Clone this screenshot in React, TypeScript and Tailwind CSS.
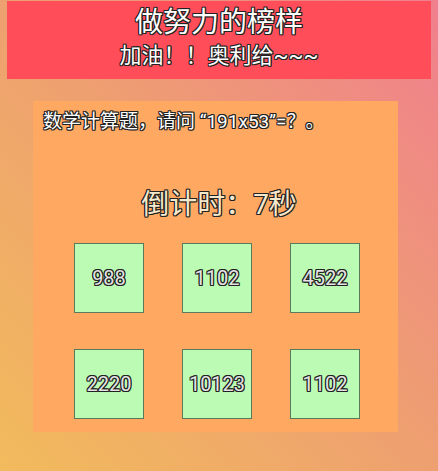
import React from "react";

const outline =
	"[text-shadow:1px_1px_0_#222,-1px_-1px_0_#222,1px_-1px_0_#222,-1px_1px_0_#222,0_1px_0_#222,0_-1px_0_#222,1px_0_0_#222,-1px_0_0_#222]";

const answers = ["988", "1102", "4522", "2220", "10123", "1102"];

function App() {
	return (
		<main className="min-h-[471px] w-full overflow-hidden bg-[linear-gradient(to_top_right,#f2bb5c,#eea070_50%,#f07f8e)] pt-px font-['Roboto','Noto_Sans_CJK_SC',sans-serif]">
			{/* Header */}
			<div className="mx-[7px] flex h-[78px] flex-col items-center bg-[#ff4d5a] text-white">
				<h1 className={`mt-[4px] text-[28px] leading-[35px] ${outline}`}>
					做努力的榜样
				</h1>
				<p className={`mt-[2px] text-[22px] leading-[28px] ${outline}`}>
					加油！！奥利给~~~
				</p>
			</div>

			{/* Question card */}
			<div className="ml-[33px] mt-[22px] h-[331px] w-[365px] bg-[#ffa862]">
				<p
					className={`pl-[10px] pt-[9px] text-[19px] leading-[24px] text-white ${outline}`}
				>
					数学计算题，请问 “191x53”=？。
				</p>

				<p
					className={`mt-[52px] pl-[7px] text-center text-[28px] leading-[37px] text-[#f6e8cc] ${outline}`}
				>
					倒计时：7秒
				</p>

				<div className="mt-[20px] grid grid-cols-[70px_70px_70px] gap-x-[38px] gap-y-[36px] pl-[41px]">
					{answers.map((a, i) => (
						<div
							key={i}
							className="flex h-[70px] w-[70px] items-center justify-center border border-[#5b7a5b] bg-[#bbfbb3]"
						>
							<span className={`text-[20px] text-[#e4e4e4] ${outline}`}>
								{a}
							</span>
						</div>
					))}
				</div>
			</div>
		</main>
	);
}

export default App;
